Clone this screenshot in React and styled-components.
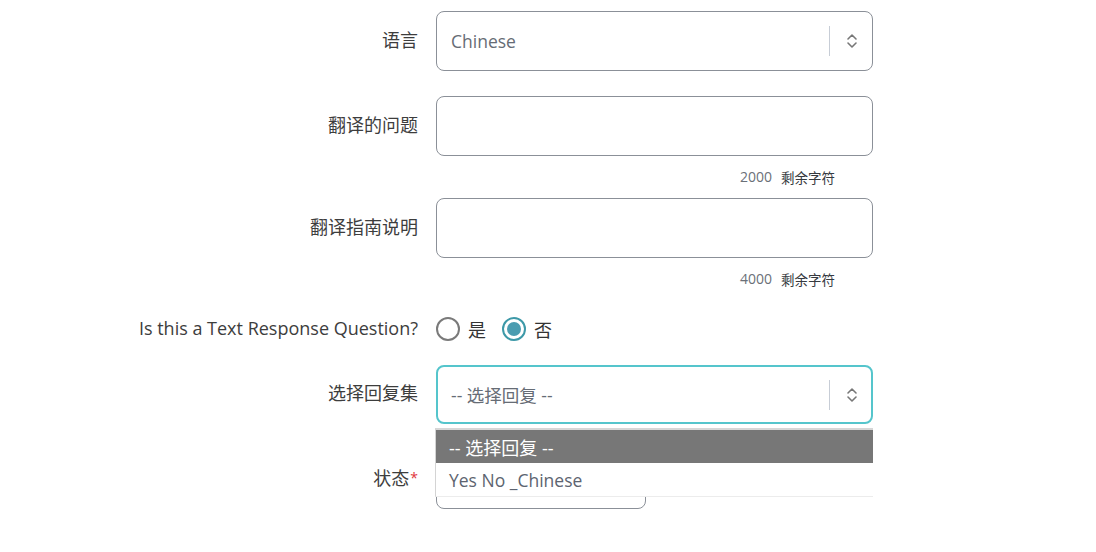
import React from "react";
import styled, { createGlobalStyle } from "styled-components";

const Global = createGlobalStyle`
  html, body { margin: 0; padding: 0; background: #fff; }
  body {
    font-family: "Open Sans", "Noto Sans CJK SC", sans-serif;
    color: #3b3b3b;
  }
  * { box-sizing: border-box; }
`;

const Form = styled.div`
  padding-top: 11px;
  display: flex;
  flex-direction: column;
  position: relative;
  width: 1096px;
  height: 552px;
  overflow: hidden;
`;

const Row = styled.div`
  display: grid;
  grid-template-columns: 418px 437px;
  column-gap: 18px;
  align-items: center;
  margin-top: ${(p) => p.$mt || 0}px;
  margin-bottom: ${(p) => (p.$mb === undefined ? 25 : p.$mb)}px;
  position: relative;
`;

const Label = styled.div`
  text-align: right;
  font-size: 18px;
  line-height: 22px;
  color: #3d3d3d;
  white-space: nowrap;
  margin-top: -3px;
`;

const Req = styled.span`
  color: #e0353b;
  font-size: 14px;
  vertical-align: top;
  margin-left: 1px;
`;

const Box = styled.div`
  height: ${(p) => (p.$focus ? 59 : 60)}px;
  width: ${(p) => p.$w || 437}px;
  border: ${(p) => (p.$focus ? "2px solid #55c5cc" : "1px solid #8b9098")};
  border-radius: 8px;
  display: flex;
  align-items: center;
  padding: 0 ${(p) => (p.$focus ? 13 : 14)}px;
  background: #fff;
  font-size: 17.5px;
  color: #666c75;
`;

const Value = styled.div`
  flex: 1;
  margin-top: -1px;
`;

const Divider = styled.div`
  width: 1px;
  height: 30px;
  background: #c7cdd6;
  margin-right: 16px;
`;

const Helper = styled.div`
  grid-column: 2;
  height: 42px;
  display: flex;
  justify-content: flex-end;
  align-items: center;
  padding-right: 38px;
  padding-bottom: 1px;
  font-size: 14px;
  color: #6b7078;
`;

const HelperCjk = styled.span`
  color: #363a40;
  font-size: 13.5px;
  margin-left: 9px;
`;

const Radios = styled.div`
  display: flex;
  align-items: center;
  height: 24px;
`;

const RadioItem = styled.label`
  display: flex;
  align-items: center;
  font-size: 18px;
  color: #333;
  margin-right: 16px;
`;

const Circle = styled.span`
  width: 24px;
  height: 24px;
  border-radius: 50%;
  border: 2px solid ${(p) => (p.$on ? "#3d99a8" : "#7a7a7a")};
  margin-right: 8px;
  display: flex;
  align-items: center;
  justify-content: center;
  &::after {
    content: "";
    display: ${(p) => (p.$on ? "block" : "none")};
    width: 14px;
    height: 14px;
    border-radius: 50%;
    background: #4a9cb0;
  }
`;

const Menu = styled.div`
  position: absolute;
  left: 435px;
  top: 428px;
  width: 438px;
  background: #fff;
  border-top: 2px solid #d6d6d6;
  border-left: 1px solid #d4d4d4;
  border-bottom: 1px solid #ececec;
  z-index: 2;
`;

const Option = styled.div`
  height: 33px;
  display: flex;
  align-items: center;
  padding-left: 13px;
  font-size: ${(p) => (p.$active ? 18 : 17.5)}px;
  background: ${(p) => (p.$active ? "#777777" : "#fff")};
  color: ${(p) => (p.$active ? "#ffffff" : "#5d6470")};
`;

const Chevrons = () => (
  <svg width="12" height="18" viewBox="0 0 12 18" fill="none" stroke="#777" strokeWidth="1.6" strokeLinecap="round" strokeLinejoin="round">
    <path d="M2 7 L6 3 L10 7" />
    <path d="M2 11 L6 15 L10 11" />
  </svg>
);

export default function App() {
  return (
    <>
      <Global />
      <Form>
        <Row>
          <Label>语言</Label>
          <Box>
            <Value>Chinese</Value>
            <Divider />
            <Chevrons />
          </Box>
        </Row>
        <Row $mb={0}>
          <Label>翻译的问题</Label>
          <Box />
        </Row>
        <Row $mb={0}>
          <Helper>
            2000<HelperCjk>剩余字符</HelperCjk>
          </Helper>
        </Row>
        <Row $mb={0}>
          <Label>翻译指南说明</Label>
          <Box />
        </Row>
        <Row $mb={0}>
          <Helper>
            4000<HelperCjk>剩余字符</HelperCjk>
          </Helper>
        </Row>
        <Row $mt={17} $mb={24}>
          <Label>Is this a Text Response Question?</Label>
          <Radios>
            <RadioItem>
              <Circle />是
            </RadioItem>
            <RadioItem>
              <Circle $on />否
            </RadioItem>
          </Radios>
        </Row>
        <Row>
          <Label>选择回复集</Label>
          <Box $focus>
            <Value>-- 选择回复 --</Value>
            <Divider />
            <Chevrons />
          </Box>
        </Row>
        <Row>
          <Label>
            状态<Req>*</Req>
          </Label>
          <Box $w={210} />
        </Row>
        <Menu>
          <Option $active>-- 选择回复 --</Option>
          <Option>Yes No _Chinese</Option>
        </Menu>
      </Form>
    </>
  );
}
